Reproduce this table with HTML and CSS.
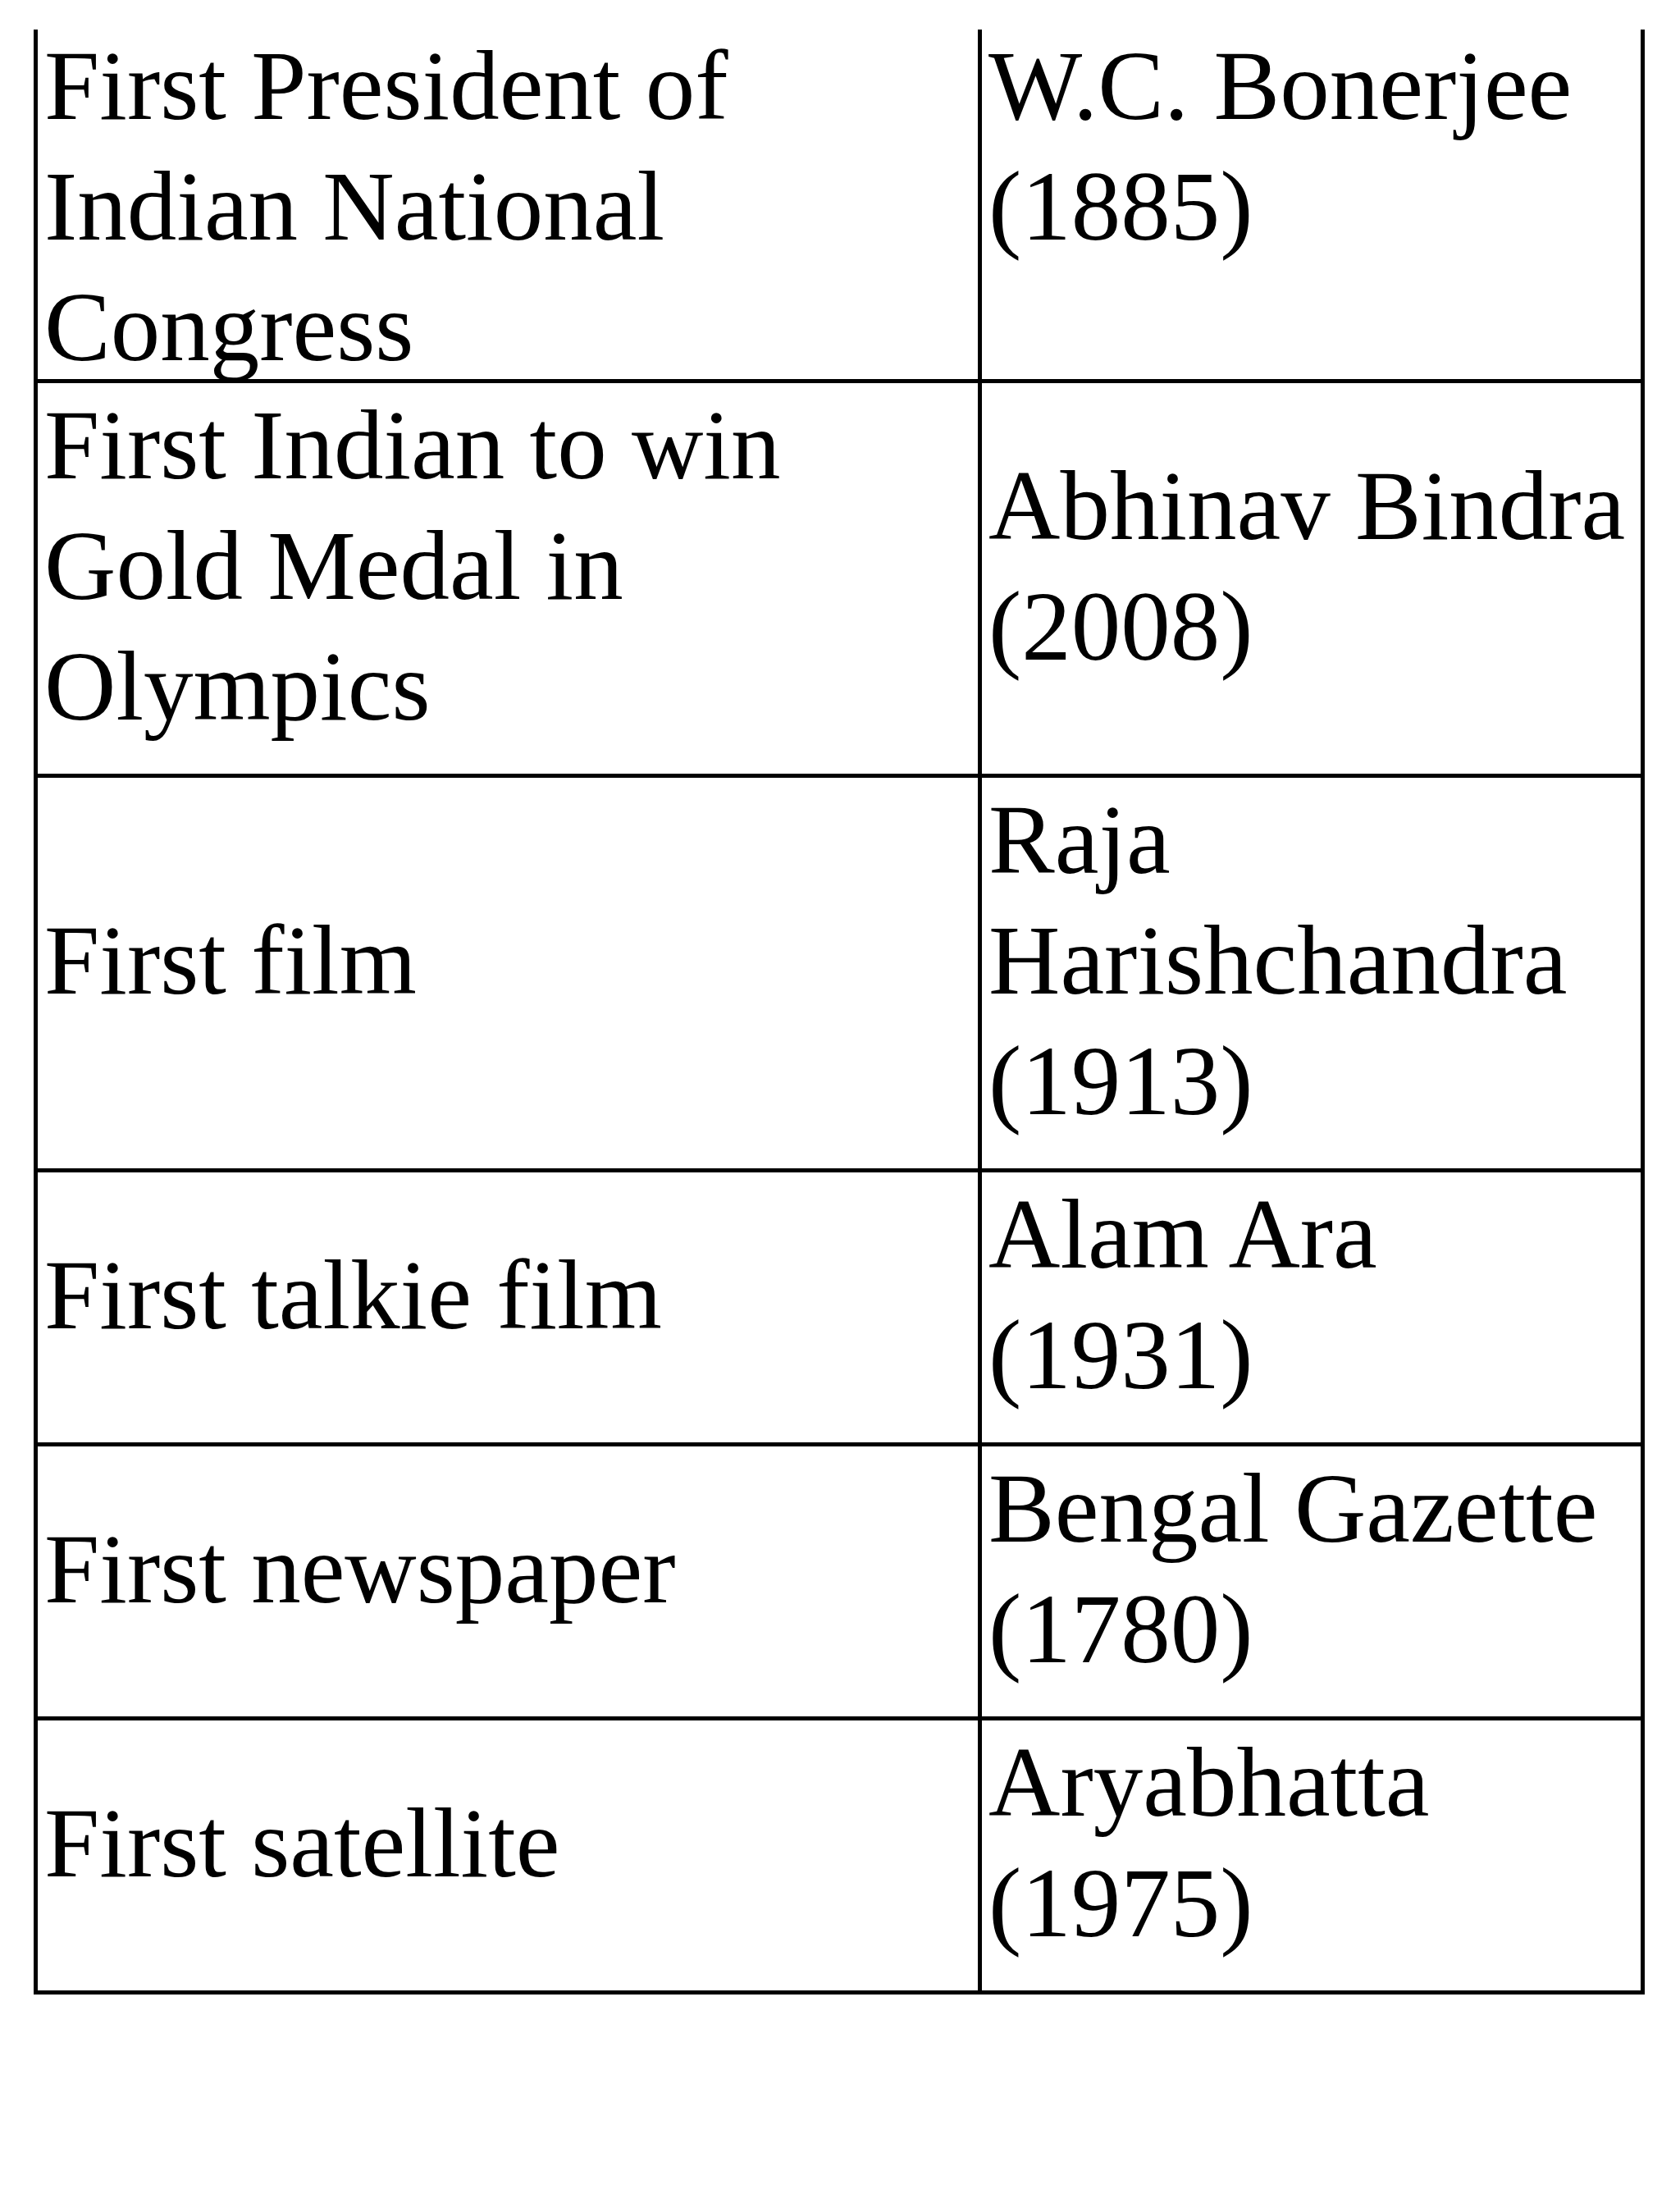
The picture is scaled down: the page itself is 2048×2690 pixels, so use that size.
FILE: index.html
```html
<!DOCTYPE html>
<html lang="en">
<head>
<meta charset="utf-8">
<title>Indian Firsts</title>
<link rel="stylesheet" href="styles.css">
</head>
<body>
<div class="page">
  <div class="clip">
    <table class="facts">
      <tr class="first">
        <td class="q"><div class="txt">First President of<br>Indian National<br>Congress</div></td>
        <td class="a"><div class="txt">W.C. Bonerjee<br>(1885)</div></td>
      </tr>
      <tr>
        <td class="q"><div class="txt">First Indian to win<br>Gold Medal in<br>Olympics</div></td>
        <td class="a"><div class="txt">Abhinav Bindra<br>(2008)</div></td>
      </tr>
      <tr>
        <td class="q"><div class="txt">First film</div></td>
        <td class="a"><div class="txt">Raja<br>Harishchandra<br>(1913)</div></td>
      </tr>
      <tr>
        <td class="q"><div class="txt">First talkie film</div></td>
        <td class="a"><div class="txt">Alam Ara<br>(1931)</div></td>
      </tr>
      <tr>
        <td class="q"><div class="txt">First newspaper</div></td>
        <td class="a"><div class="txt">Bengal Gazette<br>(1780)</div></td>
      </tr>
      <tr>
        <td class="q"><div class="txt">First satellite</div></td>
        <td class="a"><div class="txt">Aryabhatta<br>(1975)</div></td>
      </tr>
    </table>
  </div>
</div>
</body>
</html>
```

FILE: styles.css
```css
html, body {
  margin: 0;
  padding: 0;
  background: #fff;
}

body {
  font-family: "Liberation Serif", "Times New Roman", serif;
  color: #000;
}

.page {
  padding: 36px 0 0 41px;
}

.clip {
  overflow: hidden;
  width: 1964px;
}

.facts {
  border-collapse: separate;
  border-spacing: 0;
  table-layout: fixed;
  width: 1964px;
  margin-top: -5px;
  font-size: 121px;
  line-height: 147px;
}

.facts td {
  box-sizing: border-box;
  padding: 2px 7px 33px 8px;
  vertical-align: middle;
  border-right: 5px solid #000;
  border-bottom: 5px solid #000;
  white-space: nowrap;
}

.facts td.q {
  width: 1156px;
  border-left: 5px solid #000;
}

.facts td.a {
  width: 808px;
}

.facts tr.first td {
  vertical-align: top;
  padding-top: 0;
  padding-bottom: 0;
}

.facts tr.first .txt {
  margin-bottom: -10px;
}
```
